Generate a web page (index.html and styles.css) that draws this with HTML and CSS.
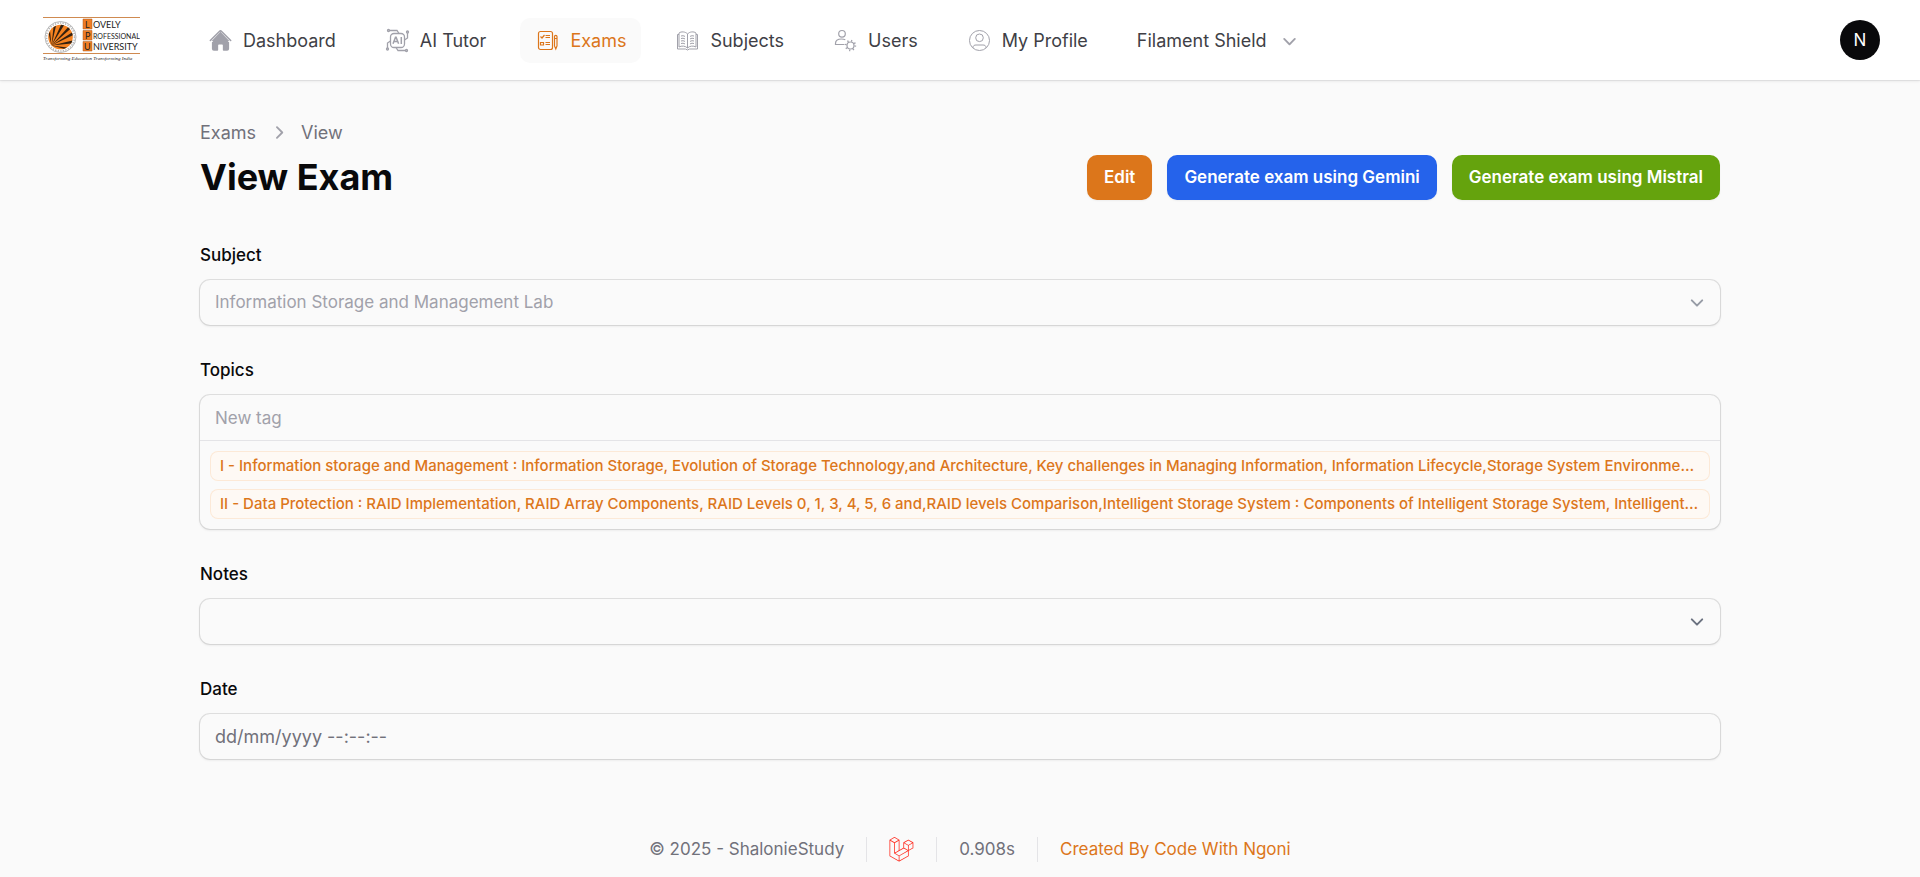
FILE: index.html
```html
<!DOCTYPE html>
<html lang="en">
<head>
<meta charset="utf-8">
<meta name="viewport" content="width=device-width, initial-scale=1">
<title>View Exam - ShalonieStudy</title>
<link rel="stylesheet" href="styles.css">
</head>
<body>
<header class="topbar">
  <a class="brand" href="#" aria-label="Lovely Professional University">
    <svg class="brand-logo" viewBox="0 0 100 50" aria-hidden="true">
      <path d="M3 2.500h97M3 38.500h97" stroke="#cf8a50" stroke-width="1"/>
      <circle cx="20.500" cy="22" r="15.500" fill="#fff" stroke="#999" stroke-width=".7"/>
      <circle cx="20.500" cy="22" r="14" fill="none" stroke="#b5b5b5" stroke-width="1.600" stroke-dasharray="1.300 1.300"/>
      <circle cx="20.500" cy="22" r="12.300" fill="#f58220"/>
      <path d="M11.500 30.500 8.800 19l1.300-2.600zM11.500 30.500 13.500 12.300l2.500-1.600zM11.500 30.500 21 9.700l3 .5zM11.500 30.500 28 12.200l2 2zM11.500 30.500 32 17.500l.8 2.800zM11.500 30.500l21-5-1.300 3zM11.500 30.500l15.500 2-3 1.300z" fill="#33200f"/>
      <path d="M43 4h9v10h-9zM43 15.500h9v9.500h-9zM43 26.500h9V36h-9z" fill="#f07d24" stroke="#a85a20" stroke-width=".5"/>
      <g class="logo-name">
        <text x="45" y="12.500">L</text><text x="45" y="23.800">P</text><text x="44" y="34.800">U</text>
        <text x="53" y="12.500">OVELY</text>
        <text class="logo-long" x="53" y="23.500">ROFESSIONAL</text>
        <text x="53" y="34.800">NIVERSITY</text>
      </g>
      <text class="logo-motto" x="3" y="45">Transforming Education Transforming India</text>
    </svg>
  </a>
  <nav class="nav" aria-label="Main">
    <a class="nav-item" href="#">
      <svg class="icon" viewBox="0 0 24 24" fill="currentColor" aria-hidden="true"><path d="M11.470 3.840a.75.75 0 0 1 1.060 0l8.690 8.690a.75.75 0 1 0 1.060-1.060l-8.689-8.690a2.250 2.250 0 0 0-3.182 0l-8.690 8.690a.75.75 0 0 0 1.061 1.060l8.690-8.690Z"/><path d="m12 5.432 8.159 8.159c.03.03.06.058.091.086v6.198c0 1.035-.84 1.875-1.875 1.875H15a.75.75 0 0 1-.75-.75v-4.500a.75.75 0 0 0-.75-.75h-3a.75.75 0 0 0-.75.75V21a.75.75 0 0 1-.75.75H5.625a1.875 1.875 0 0 1-1.875-1.875v-6.198a2.290 2.290 0 0 0 .091-.086L12 5.432Z"/><path d="M12 3.500 3.500 12.500h17z"/></svg>
      <span>Dashboard</span>
    </a>
    <a class="nav-item" href="#">
      <svg class="icon" viewBox="0 0 25 25" fill="none" stroke="currentColor" stroke-width="1.300" aria-hidden="true"><rect x="5.500" y="5.500" width="14" height="14" rx="3.500"/><path d="M4.500 2.500H12l2 3M22.500 5v5l-3 2M20.500 22.500H13l-2-3M2.500 20v-5l3-2"/><circle cx="3.500" cy="2.500" r="1"/><circle cx="22.500" cy="4" r="1"/><circle cx="21.500" cy="22.500" r="1"/><circle cx="2.500" cy="21" r="1"/><path d="m8 15.800 2.500-6.600h.6l2.500 6.600M9 13.600h3.600M16.300 9v7" stroke-width="1.500"/></svg>
      <span>AI Tutor</span>
    </a>
    <a class="nav-item active" href="#" aria-current="page">
      <svg class="icon" viewBox="0 0 25 25" fill="none" stroke="currentColor" stroke-width="1.200" aria-hidden="true"><rect x="3.500" y="3.500" width="14" height="18" rx="2"/><path d="m5.500 8.500 1.500 1.500 2.500-3M10.500 7.500H15M10.500 9.500H15M10.500 14.500H15M10.500 16.500H15M5.500 14.500h3v2.500h-3zM19.500 8.500c0-1.600 2.500-1.600 2.500 0v9.500l-1.200 3-1.300-3zM19.500 10.500H22"/></svg>
      <span>Exams</span>
    </a>
    <a class="nav-item" href="#">
      <svg class="icon" viewBox="0 0 25 25" fill="none" stroke="currentColor" aria-hidden="true"><path d="M12.500 6C10.500 3.500 6 3.300 4 5v14c2.500-1.500 6.500-1.200 8.500 1 2-2.200 6-2.500 8.500-1V5c-2-1.700-6.500-1.500-8.500 1zM12.500 6v14M4 6.500H2.500v14.500h8q2 2 4 0h8V6.500H21"/><path d="M6 8q2-.8 4 .4M6 10.500q2-.8 4 .4M6 13q2-.8 4 .4M6 15.500q2-.8 4 .4M15 8.400q2-1.200 4-.4M15 10.900q2-1.200 4-.4M15 13.400q2-1.200 4-.4M15 15.900q2-1.200 4-.4"/></svg>
      <span>Subjects</span>
    </a>
    <a class="nav-item" href="#">
      <svg class="icon" viewBox="0 0 25 25" fill="none" stroke="currentColor" stroke-width="1.200" aria-hidden="true"><circle cx="9" cy="5.800" r="3.300"/><path d="M11.500 16.500h-9v-1c0-3 2.500-4.500 6-4.500 1.500 0 2.800.3 3.800.8"/><circle cx="17.500" cy="17.500" r="3.500"/><circle cx="17.500" cy="17.500" r="4.800" stroke-width="1.800" stroke-dasharray="1.200 2.570"/></svg>
      <span>Users</span>
    </a>
    <a class="nav-item" href="#">
      <svg class="icon" viewBox="0 0 25 25" fill="none" stroke="currentColor" aria-hidden="true"><circle cx="12.500" cy="12.500" r="10"/><circle cx="12.500" cy="9.800" r="3.800"/><path d="M6 20v-.5c0-2 1.500-2.500 3-2.500h7c1.500 0 3 .5 3 2.500v.5"/></svg>
      <span>My Profile</span>
    </a>
    <button class="nav-item" type="button">
      <span>Filament Shield</span>
      <svg class="icon" viewBox="0 0 20 20" fill="currentColor" aria-hidden="true"><path d="M5.220 8.220a.75.75 0 0 1 1.060 0L10 11.940l3.720-3.720a.75.75 0 1 1 1.060 1.060l-4.250 4.250a.75.75 0 0 1-1.060 0L5.220 9.280a.75.75 0 0 1 0-1.060Z"/></svg>
    </button>
  </nav>
  <button class="avatar" type="button" aria-label="User menu">N</button>
</header>

<main class="main">
  <div class="page-header">
    <div>
      <nav class="breadcrumbs" aria-label="Breadcrumb">
        <a href="#">Exams</a>
        <svg class="icon" viewBox="0 0 20 20" fill="currentColor" aria-hidden="true"><path d="M8.220 5.220a.75.75 0 0 1 1.060 0l4.250 4.250a.75.75 0 0 1 0 1.060l-4.250 4.250a.75.75 0 0 1-1.060-1.060L11.940 10 8.220 6.280a.75.75 0 0 1 0-1.060Z"/></svg>
        <a href="#">View</a>
      </nav>
      <h1 class="title">View Exam</h1>
    </div>
    <div class="actions">
      <button class="btn btn-primary" type="button">Edit</button>
      <button class="btn btn-info" type="button">Generate exam using Gemini</button>
      <button class="btn btn-success" type="button">Generate exam using Mistral</button>
    </div>
  </div>

  <form class="form">
    <div class="field">
      <label class="label" for="subject">Subject</label>
      <select class="control select muted" id="subject" disabled><option>Information Storage and Management Lab</option></select>
    </div>
    <div class="field">
      <label class="label" for="topics">Topics</label>
      <div class="tags-input">
        <input class="tag-entry" id="topics" type="text" placeholder="New tag" disabled>
        <ul class="tags">
          <li class="tag">I - Information storage and Management : Information Storage, Evolution of Storage Technology,and Architecture, Key challenges in Managing Information, Information Lifecycle,Storage System Environme…</li>
          <li class="tag">II - Data Protection : RAID Implementation, RAID Array Components, RAID Levels 0, 1, 3, 4, 5, 6 and,RAID levels Comparison,Intelligent Storage System : Components of Intelligent Storage System, Intelligent…</li>
        </ul>
      </div>
    </div>
    <div class="field">
      <label class="label" for="notes">Notes</label>
      <select class="control select" id="notes" disabled><option></option></select>
    </div>
    <div class="field">
      <label class="label" for="date">Date</label>
      <input class="control date" id="date" type="text" placeholder="dd/mm/yyyy --:--:--" disabled>
    </div>
  </form>
</main>

<footer class="footer">
  <span>© 2025 - ShalonieStudy</span>
  <span class="divider"></span>
  <a class="laravel" href="#" aria-label="Laravel">
    <svg viewBox="0 0 50 52" aria-hidden="true"><path fill="#ff2d20" d="M49.626 11.564a.809.809 0 0 1 .028.209v10.972a.8.8 0 0 1-.402.694l-9.209 5.302V39.250c0 .286-.152.550-.4.694L20.420 51.010c-.044.025-.092.041-.140.058-.018.006-.035.017-.054.022a.805.805 0 0 1-.410 0c-.022-.006-.042-.018-.063-.026-.044-.016-.090-.030-.132-.054L.402 39.944A.801.801 0 0 1 0 39.250V6.334c0-.072.010-.142.028-.210.006-.023.020-.044.028-.067.015-.042.029-.085.051-.124.015-.026.037-.047.055-.071.023-.032.044-.065.071-.093.023-.023.053-.040.079-.060.029-.024.055-.050.088-.069h.001l9.610-5.533a.802.802 0 0 1 .8 0l9.610 5.533h.002c.032.020.059.045.088.068.026.020.055.038.078.060.028.029.048.062.072.094.017.024.040.045.054.071.023.040.036.082.052.124.008.023.022.044.028.068a.809.809 0 0 1 .028.209v20.559l8.008-4.611v-10.510c0-.070.010-.141.028-.208.007-.024.020-.045.028-.068.016-.042.030-.085.052-.124.015-.026.037-.047.054-.071.024-.032.044-.065.072-.093.023-.023.052-.040.078-.060.030-.024.056-.050.088-.069h.001l9.611-5.533a.801.801 0 0 1 .8 0l9.610 5.533c.034.020.060.045.090.068.025.020.054.038.077.060.028.029.048.062.072.094.018.024.040.045.054.071.023.039.036.082.052.124.009.023.022.044.028.068zm-1.574 10.718v-9.124l-3.363 1.936-4.646 2.675v9.124l8.010-4.611zm-9.610 16.505v-9.130l-4.570 2.610-13.050 7.448v9.216l17.620-10.144zM1.602 7.719v31.068L19.220 48.930v-9.214l-9.204-5.209-.003-.002-.004-.002c-.031-.018-.057-.044-.086-.066-.025-.020-.054-.036-.076-.058l-.002-.003c-.026-.025-.044-.056-.066-.084-.020-.027-.044-.050-.060-.078l-.001-.003c-.018-.030-.029-.066-.042-.100-.013-.030-.030-.058-.038-.090v-.001c-.010-.038-.012-.078-.016-.117-.004-.030-.012-.060-.012-.090v-21.483L4.965 9.654 1.602 7.720zm8.810-5.994L2.405 6.334l8.005 4.609 8.006-4.610-8.006-4.608zm4.164 28.764l4.645-2.674V7.719l-3.363 1.936-4.646 2.675v20.096l3.364-1.937zM39.243 7.164l-8.006 4.609 8.006 4.609 8.005-4.610-8.005-4.608zm-.801 10.605l-4.646-2.675-3.363-1.936v9.124l4.645 2.674 3.364 1.937v-9.124zM20.020 38.330l11.743-6.704 5.870-3.350-8-4.606-9.211 5.303-8.395 4.833 7.993 4.524z"/></svg>
  </a>
  <span class="divider"></span>
  <span>0.908s</span>
  <span class="divider"></span>
  <a class="credit" href="#">Created By Code With Ngoni</a>
</footer>
</body>
</html>
```
FILE: styles.css
```css
*, *::before, *::after { box-sizing: border-box; }

body {
  margin: 0;
  min-height: 100vh;
  display: flex;
  flex-direction: column;
  background: #fafafa;
  color: #09090b;
  font-family: Inter, "Liberation Sans", sans-serif;
  font-size: 17px;
  line-height: 25px;
}

a { color: inherit; text-decoration: none; }

button, input, select { font: inherit; }

.icon {
  width: 25px;
  height: 25px;
  flex: none;
  color: #a1a1aa;
}

.topbar {
  display: flex;
  align-items: center;
  height: 80px;
  padding: 0 40px;
  background: #fff;
  box-shadow: 0 0 0 1px #09090b0d, 0 1px 3px #0000001a;
}

.brand { margin-right: 53px; }

.brand-logo {
  display: block;
  width: 100px;
  height: 50px;
}

.logo-name { font-family: Lato, sans-serif; font-size: 9px; fill: #222; }
.logo-long { font-size: 7px; }
.logo-motto { font-family: "Liberation Serif", serif; font-size: 5px; font-style: italic; fill: #222; }

.nav {
  display: flex;
  align-items: center;
  gap: 19px;
  flex: 1;
}

.nav-item {
  display: flex;
  align-items: center;
  gap: 10px;
  padding: 10px 15px;
  border: 0;
  border-radius: 10px;
  background: none;
  color: #3f3f46;
  font-size: 18px;
  white-space: nowrap;
}

.nav-item.active { background: #fafafa; color: #dc761b; }
.nav-item.active .icon { color: #dc761b; }

.avatar {
  width: 40px;
  height: 40px;
  padding: 0;
  border: 0;
  border-radius: 50%;
  background: #09090b;
  color: #fff;
}

.main {
  flex: 1;
  width: 100%;
  max-width: 1600px;
  margin: 0 auto;
  padding: 40px;
}

.page-header {
  display: flex;
  align-items: flex-end;
  justify-content: space-between;
  margin-bottom: 40px;
}

.breadcrumbs {
  display: flex;
  align-items: center;
  gap: 10px;
  margin-bottom: 10px;
  color: #71717a;
  font-size: 18px;
}

.title {
  margin: 0;
  font-size: 36px;
  line-height: 45px;
  font-weight: 700;
}

.actions { display: flex; gap: 15px; }

.btn {
  padding: 10px 17px;
  border: 0;
  border-radius: 10px;
  color: #fff;
  font-weight: 600;
  box-shadow: 0 1px 2px #0000000d;
}

.btn-primary { background: #dc761b; }
.btn-info { background: #2563eb; }
.btn-success { background: #65a30d; }

.form { display: grid; gap: 30px; }

.field { display: grid; gap: 10px; min-width: 0; }

.label { line-height: 30px; font-weight: 500; }

.control, .tags-input {
  width: 100%;
  border: 0;
  border-radius: 10px;
  background-color: #fafafa;
  box-shadow: 0 0 0 1px #09090b1a, 0 1px 2px 1px #0000000d;
}

.control {
  height: 45px;
  padding: 0 15px;
  color: #71717a;
  opacity: 1;
}

.select {
  appearance: none;
  background-image: url("data:image/svg+xml,%3Csvg xmlns='http://www.w3.org/2000/svg' fill='none' viewBox='0 0 20 20'%3E%3Cpath stroke='%236b7280' stroke-linecap='round' stroke-linejoin='round' stroke-width='1.5' d='m6 8 4 4 4-4'/%3E%3C/svg%3E");
  background-repeat: no-repeat;
  background-position: right 10px center;
  background-size: 26px;
}

.muted {
  color: #a1a1aa;
  background-image: url("data:image/svg+xml,%3Csvg xmlns='http://www.w3.org/2000/svg' fill='none' viewBox='0 0 20 20'%3E%3Cpath stroke='%23979ca6' stroke-linecap='round' stroke-linejoin='round' stroke-width='1.5' d='m6 8 4 4 4-4'/%3E%3C/svg%3E");
}

.date { font-size: 18px; }
.date::placeholder { color: #71717a; }

.tag-entry {
  display: block;
  width: 100%;
  height: 45px;
  padding: 0 15px;
  border: 0;
  background: none;
}

.tag-entry::placeholder { color: #a1a1aa; }

.tags {
  display: grid;
  gap: 8px;
  margin: 0;
  padding: 10px;
  border-top: 1px solid #e4e4e7;
  list-style: none;
}

.tag {
  padding: 5px 10px;
  border-radius: 8px;
  background: #fef9f4;
  box-shadow: inset 0 0 0 1px #fce9d7;
  color: #dc761b;
  font-size: 15px;
  line-height: 20px;
  font-weight: 500;
  overflow: hidden;
  text-overflow: ellipsis;
  white-space: nowrap;
}

.footer {
  display: flex;
  align-items: center;
  justify-content: center;
  gap: 22px;
  padding: 0 20px 15px 40px;
  color: #71717a;
}

.divider { width: 1px; height: 25px; background: #e4e4e7; }

.laravel svg { display: block; width: 25px; height: 25px; }

.credit { color: #dc761b; }
```
